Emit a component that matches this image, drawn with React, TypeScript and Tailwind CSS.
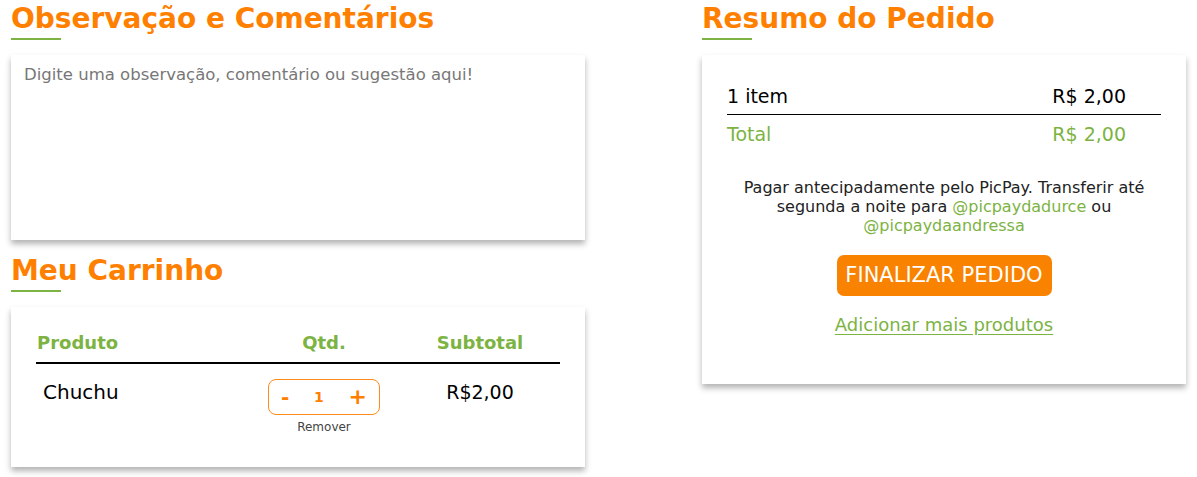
import React from "react";

const font = { fontFamily: "'DejaVu Sans', 'Noto Sans', sans-serif" };

const SectionTitle = ({ children }: { children: React.ReactNode }) => (
  <div className="flex flex-col">
    <h2 className="h-[38px] text-[28px] font-bold leading-[38px] text-[#ff7f00] whitespace-nowrap">
      {children}
    </h2>
    <div className="h-[2px] w-[50px] bg-[#7cb342]" />
  </div>
);

const Card = ({ className, children }: { className?: string; children?: React.ReactNode }) => (
  <div className={`bg-white shadow-[0_4px_6px_rgba(0,0,0,0.3)] ${className ?? ""}`}>{children}</div>
);

export default function App() {
  return (
    <div style={font} className="flex w-[1197px] h-[477px] bg-white pl-[11px] text-black">
      {/* left column */}
      <div className="flex w-[574px] flex-col">
        <SectionTitle>Observação e Comentários</SectionTitle>
        <Card className="mt-[15px] h-[185px]">
          <textarea
            className="h-full w-full resize-none px-[13px] py-[9px] text-[16.5px] leading-[22px] text-gray-700 placeholder:text-[#777] outline-none"
            placeholder="Digite uma observação, comentário ou sugestão aqui!"
          />
        </Card>

        <div className="mt-[12px]">
          <SectionTitle>Meu Carrinho</SectionTitle>
        </div>
        <Card className="mt-[15px] h-[160px] px-[25px] pt-[22px]">
          <div className="grid grid-cols-[212px_152px_160px] border-b-2 border-black pb-[6px] text-[18px] font-bold text-[#7cb342]">
            <div className="pl-[1px]">Produto</div>
            <div className="text-center">Qtd.</div>
            <div className="text-center">Subtotal</div>
          </div>
          <div className="grid grid-cols-[212px_152px_160px] pt-[15px]">
            <div className="pl-[7px] text-[20px] leading-[26px]">Chuchu</div>
            <div className="flex flex-col items-center">
              <div className="flex h-[36px] w-[112px] items-center justify-between rounded-[8px] border border-[#ff8c1a] px-[12px] text-[#ff7f00] font-bold">
                <button className="text-[20px] leading-none">-</button>
                <span className="text-[14px]">1</span>
                <button className="text-[22px] leading-none">+</button>
              </div>
              <span className="mt-[3px] text-[12px] text-[#444]">Remover</span>
            </div>
            <div className="text-center text-[19px] leading-[26px]">R$2,00</div>
          </div>
        </Card>
      </div>

      {/* right column */}
      <div className="ml-[117px] flex w-[484px] flex-col">
        <SectionTitle>Resumo do Pedido</SectionTitle>
        <Card className="mt-[15px] h-[329px] px-[25px] pt-[28px]">
          <div className="flex justify-between border-b border-black pb-[5px] pr-[35px] text-[19px] leading-[26px]">
            <span>1 item</span>
            <span>R$ 2,00</span>
          </div>
          <div className="flex justify-between pt-[5px] pr-[35px] text-[19px] leading-[28px] text-[#7cb342]">
            <span>Total</span>
            <span>R$ 2,00</span>
          </div>
          <p className="mt-[30px] text-center text-[16px] leading-[19px] text-[#222] whitespace-nowrap">
            Pagar antecipadamente pelo PicPay. Transferir até
            <br />
            segunda a noite para <span className="text-[#7cb342]">@picpaydadurce</span> ou
            <br />
            <span className="text-[#7cb342]">@picpaydaandressa</span>
          </p>
          <div className="mt-[20px] flex justify-center">
            <button className="h-[41px] w-[215px] rounded-[7px] bg-[#f98200] text-[21px] text-white">
              FINALIZAR PEDIDO
            </button>
          </div>
          <div className="mt-[15px] text-center">
            <a href="#" className="text-[18px] text-[#7cb342] underline underline-offset-[3px]">
              Adicionar mais produtos
            </a>
          </div>
        </Card>
      </div>
    </div>
  );
}
